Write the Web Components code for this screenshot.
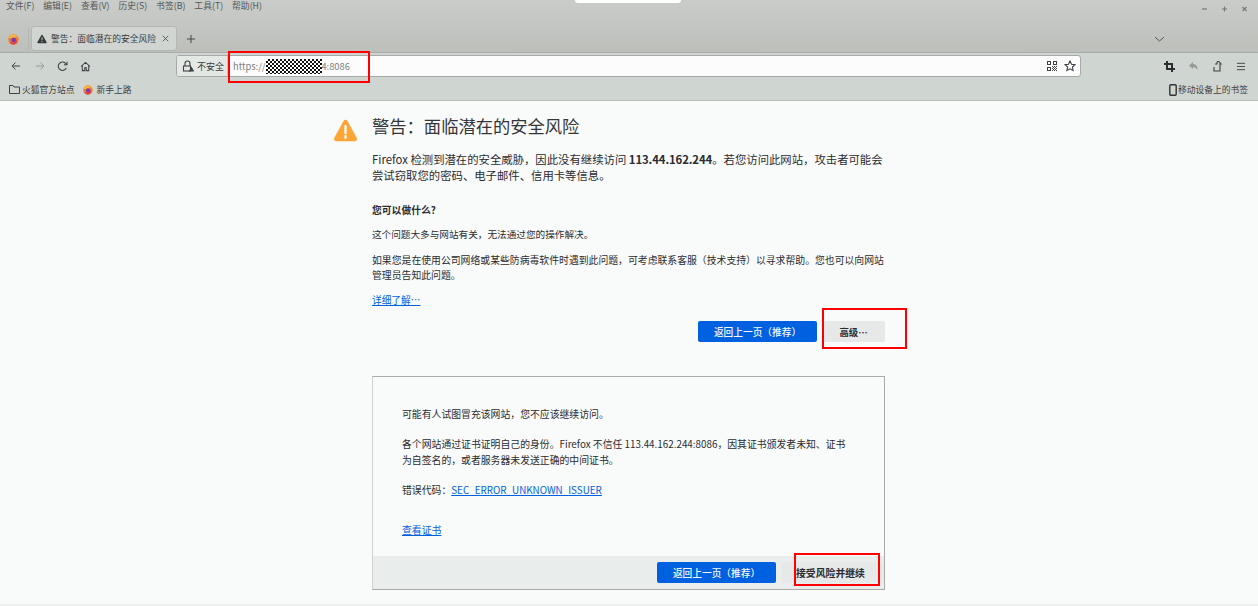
<!DOCTYPE html>
<html lang="zh">
<head>
<meta charset="utf-8">
<title>警告：面临潜在的安全风险</title>
<style>
  html, body { margin: 0; height: 100%; overflow: hidden; background: #f9fbfa; }
  body { font-family: "Noto Sans CJK SC", "Noto Sans", sans-serif; color: #2b2b30; }
</style>
</head>
<body>
<ff-app></ff-app>

<script>
const FOX = `<svg width="12" height="12" viewBox="0 0 12 12"><circle cx="6" cy="6" r="5.6" fill="#f0792b"/><path d="M1 4.5Q2 1 6 .6Q10 1 11.3 5Q10 2.6 7.6 2.8Q9 4 8.4 5.4Q7 3.6 4.6 4.4Q3 5 1 4.5Z" fill="#f6b73c"/><circle cx="6.2" cy="6.6" r="2.7" fill="#7b3bb0"/><path d="M1.2 7.5Q3 10 6 9.4Q9 9 9.6 6.4Q10.6 9.6 7 11.2Q3 12 1.2 7.5Z" fill="#e3344a"/></svg>`;

class FfMenubar extends HTMLElement {
  constructor() {
    super();
    this.attachShadow({ mode: 'open' });
    const items = ['文件(F)', '编辑(E)', '查看(V)', '历史(S)', '书签(B)', '工具(T)', '帮助(H)'];
    this.shadowRoot.innerHTML = `
      <style>
        :host { display: flex; align-items: center; height: 10px; padding: 0 6px; font-size: 8.800px; color: #55585a; position: relative; }
        span { margin-right: 8.900px; white-space: nowrap; }
        #win { margin-left: auto; display: flex; gap: 9px; padding-right: 2px; margin-top: 8px; }
        #win svg { display: block; }
        #notch { position: absolute; left: 575px; top: 0; width: 106px; height: 3px; background: #fff; border-radius: 0 0 4px 4px; }
      </style>
      ${items.map(t => `<span>${t}</span>`).join('')}
      <div id="notch"></div>
      <div id="win">
        <svg width="11" height="10" viewBox="0 0 11 10" stroke="#77797a" stroke-width="1.2"><path d="M3 5h5"/></svg>
        <svg width="11" height="10" viewBox="0 0 11 10" stroke="#77797a" stroke-width="1.2"><path d="M3 5h5M5.500 2.500v5"/></svg>
        <svg width="11" height="10" viewBox="0 0 11 10" stroke="#77797a" stroke-width="1.2"><path d="M3.500 3l4 4M7.500 3l-4 4"/></svg>
      </div>`;
  }
}
customElements.define('ff-menubar', FfMenubar);

class FfTabstrip extends HTMLElement {
  constructor() {
    super();
    this.attachShadow({ mode: 'open' });
    this.shadowRoot.innerHTML = `
      <style>
        :host { display: flex; align-items: center; height: 26px; margin-top: 16px; padding-left: 8px; }
        #logo { width: 11px; display: flex; padding-right: 9px; border-right: 1px solid #b3b6b1; height: 24px; align-items: center; margin-right: 2px; }
        #logo svg { width: 11px; height: 11px; }
        #tab { width: 146px; height: 25px; align-self: flex-start; box-sizing: border-box; border: 1px solid #b4b7b2; border-radius: 3px; background: #d0d5d1; display: flex; align-items: center; padding: 0 7px 0 5px; font-size: 8.750px; color: #3a3c3e; white-space: nowrap; }
        #tab svg.warn { margin-right: 4px; flex: none; }
        #close { margin-left: auto; display: flex; }
        #plus { margin-left: 9px; display: flex; }
        #chev { margin-left: auto; margin-right: 93px; display: flex; }
      </style>
      <div id="logo">${FOX}</div>
      <div id="tab">
        <svg class="warn" width="10" height="10" viewBox="0 0 12 11"><path d="M6 .5Q6.600 .5 7 1.200L11.600 9.300Q12 10.500 10.800 10.500H1.200Q0 10.500 .4 9.300L5 1.200Q5.400 .5 6 .5Z" fill="#37393b"/><path d="M6 3.500v3.500M6 8v1.300" stroke="#d0d5d1" stroke-width="1.100"/></svg>
        警告：面临潜在的安全风险
        <span id="close"><svg width="7" height="7" viewBox="0 0 9 9" stroke="#4a4c4e" stroke-width="1.100"><path d="M1 1l7 7M8 1l-7 7"/></svg></span>
      </div>
      <span id="plus"><svg width="10" height="10" viewBox="0 0 11 11" stroke="#3c3e40" stroke-width="1"><path d="M5.500 1v9M1 5.500h9"/></svg></span>
      <span id="chev"><svg width="11" height="7" viewBox="0 0 11 7" fill="none" stroke="#55585a" stroke-width="1"><path d="M1 1l4.500 4 4.500-4"/></svg></span>`;
  }
}
customElements.define('ff-tabstrip', FfTabstrip);

class FfNavbar extends HTMLElement {
  constructor() {
    super();
    this.attachShadow({ mode: 'open' });
    this.shadowRoot.innerHTML = `
      <style>
        :host { display: flex; align-items: center; height: 27px; padding-left: 11px; background: #cfd5d1; border-top: 1px solid #a9ada8; box-sizing: border-box; }
        svg { display: block; flex: none; fill: none; stroke: #3f4143; stroke-width: 1.100; }
        #back { margin-right: 14px; }
        #fwd { margin-right: 12px; stroke: #96999a; }
        #reload { margin-right: 12px; }
        #home { margin-right: 85px; }
        #url { width: 905px; height: 22px; box-sizing: border-box; border: 1px solid #a6a9a7; border-radius: 3px; background: #fbfcfb; display: flex; align-items: center; font-size: 9.300px; overflow: hidden; }
        #lockbox { display: flex; align-items: center; height: 100%; width: 51px; box-sizing: border-box; background: #e4e8e5; border-right: 1px solid #c0c3c1; padding: 0 0 0 5px; color: #37393b; white-space: nowrap; gap: 2px; margin-right: 5px; font-size: 9px; }
        #addr { color: #7d7f80; display: flex; align-items: center; white-space: nowrap; }
        #mask { width: 56px; height: 15px; margin: 0 -1px 0 1px;
          background: repeating-conic-gradient(#111 0 25%, #fff 0 50%) 0 0 / 4px 4px; }
        #right { margin-left: auto; display: flex; gap: 7px; padding-right: 4px; align-items: center; }
        #tools { display: flex; align-items: center; gap: 13px; margin-left: 83px; }
      </style>
      <svg id="back" width="10" height="10" viewBox="0 0 11 11"><path d="M10 5.500H1.200M5 1.700L1.200 5.500 5 9.300"/></svg>
      <svg id="fwd" width="10" height="10" viewBox="0 0 11 11"><path d="M1 5.500h8.800M6 1.700l3.800 3.800L6 9.300"/></svg>
      <svg id="reload" width="11" height="11" viewBox="0 0 11 11"><path d="M9.300 7A4.200 4.200 0 1 1 8.500 2.300L9.800 3.500"/><path d="M10 .8v3H7" /></svg>
      <svg id="home" width="11" height="11" viewBox="0 0 12 12"><path d="M1 6L6 1.500 11 6M2.500 5v5.500h2.700V7.500h1.600v3h2.700V5"/></svg>
      <div id="url">
        <div id="lockbox">
          <svg width="13" height="12" viewBox="0 0 13 12"><path d="M3 6V3.500a2.500 2.500 0 0 1 5 0V6"/><rect x="1.500" y="6" width="7" height="5"/><path d="M9.500 6.500l2.800 5h-5.600z" fill="#3f4143" stroke="none"/></svg>
          不安全
        </div>
        <div id="addr">https://<span id="mask"></span>4:8086</div>
        <div id="right">
          <svg width="10" height="10" viewBox="0 0 10 10" style="stroke:none;fill:#3f4143"><path d="M0 0h4v4H0zM1 1v2h2V1zM6 0h4v4H6zM7 1v2h2V1zM0 6h4v4H0zM1 7v2h2V7zM5 5h1v1H5zM7 5h1v1H7zM9 5h1v1H9zM6 6h1v1H6zM8 6h1v1H8zM5 7h1v1H5zM7 7h1v1H7zM9 7h1v1H9zM6 8h1v1H6zM8 8h1v1H8zM5 9h1v1H5zM7 9h1v1H7zM9 9h1v1H9z"/></svg>
          <svg width="12" height="12" viewBox="0 0 12 12"><path d="M6 1l1.500 3.200 3.500.4-2.600 2.400.7 3.500L6 8.800 2.900 10.500l.7-3.500L1 4.600l3.500-.4z"/></svg>
        </div>
      </div>
      <div id="tools">
        <svg width="11" height="11" viewBox="0 0 11 11" style="stroke-width:2;stroke:#2b2d2f"><path d="M3 0v8h8M0 3h8v8"/></svg>
        <svg width="11" height="11" viewBox="0 0 11 11" style="stroke:none;fill:#96999a"><path d="M5 1L1 4.500 5 8V6q3-.2 4.500 3 .3-5.500-4.500-6z"/></svg>
        <svg width="11" height="12" viewBox="0 0 11 12"><path d="M3 4h2V2.500a1.300 1.300 0 0 1 2.200-.6L9 4H8v7H2V7"/></svg>
        <svg width="10" height="9" viewBox="0 0 11 9" style="stroke:#4a4c4e"><path d="M1 1h9M1 4.500h9M1 8h9"/></svg>
      </div>`;
  }
}
customElements.define('ff-navbar', FfNavbar);

class FfBookmarks extends HTMLElement {
  constructor() {
    super();
    this.attachShadow({ mode: 'open' });
    this.shadowRoot.innerHTML = `
      <style>
        :host { display: flex; align-items: center; height: 22px; padding: 0 10px 0 9px; background: #cfd5d1; border-bottom: 1px solid #b9bdb9; box-sizing: border-box; font-size: 8.750px; color: #3f4143; white-space: nowrap; }
        svg { display: block; flex: none; }
        .item { display: flex; align-items: center; gap: 2px; margin-right: 8px; }
        .end { margin: 0 0 0 auto; gap: 1px; }
      </style>
      <div class="item"><svg width="11" height="9" viewBox="0 0 11 9" fill="none" stroke="#3f4143"><path d="M.5 8.500V.5h3.500l1 1.500h5.500v6.500z"/></svg>火狐官方站点</div>
      <div class="item">${FOX.replace('width="12" height="12"', 'width="10" height="10"')}<span style="margin-left:2px">新手上路</span></div>
      <div class="item end"><svg width="8" height="12" viewBox="0 0 8 12" fill="none" stroke="#2f3133" stroke-width="1.400"><rect x=".8" y=".8" width="6.400" height="10.400" rx="1"/></svg>移动设备上的书签</div>`;
  }
}
customElements.define('ff-bookmarks', FfBookmarks);

class FfButton extends HTMLElement {
  constructor() {
    super();
    this.attachShadow({ mode: 'open' });
    this.shadowRoot.innerHTML = `
      <style>
        :host { display: flex; align-items: center; justify-content: center; height: 21px; border-radius: 2px; font-size: 9.400px; font-weight: 700; background: #e6e9e8; color: #2b2b30; white-space: nowrap; }
        :host([primary]) { background: #0061e0; color: #f6f9fd; font-weight: 500; font-size: 9.700px; }
      </style>
      <slot></slot>`;
  }
}
customElements.define('ff-button', FfButton);

class FfWarning extends HTMLElement {
  constructor() {
    super();
    this.attachShadow({ mode: 'open' });
    this.shadowRoot.innerHTML = `
      <style>
        :host { display: block; flex: 1; position: relative; background: #f9fbfa; font-size: 9.650px; color: #2b2b30; border-bottom: 2px solid #eef1f0; }
        #col { width: 513px; margin-left: 372px; padding-top: 13px; position: relative; }
        #icon { position: absolute; left: -39px; top: 17px; }
        h1 { margin: 0; font-size: 17.300px; font-weight: 400; line-height: 24px; color: #35363a; }
        .lead { margin: 14px 0 0; font-size: 11.360px; line-height: 15.500px; color: #2b2b30; }
        .lead b { font-weight: 700; letter-spacing: -.1px; }
        h2 { margin: 20px 0 0; font-size: 9.800px; line-height: 14px; font-weight: 700; }
        p { margin: 0; line-height: 14px; }
        .p1 { margin-top: 10px; }
        .p2 { margin-top: 12px; font-size: 9.850px; line-height: 15px; }
        a { color: #0061e0; text-decoration: underline; }
        .more { margin-top: 10px; display: block; font-size: 9.700px; line-height: 14px; }
        #btns { display: grid; grid-template-columns: 119px 63px; gap: 5px; justify-content: end; margin-top: 14px; }
        #adv { margin-top: 34px; height: 214px; box-sizing: border-box; border: 1px solid #a8aba9; border-left-color: #cfd2d0; display: flex; flex-direction: column; }
        #adv-body { flex: 1; padding: 30px 30px 0 29px; font-size: 9.850px; }
        #adv-body p { line-height: 15px; }
        #adv-body p.s1 { margin-top: 15px; line-height: 15.500px; }
        #adv-body p.s2 { margin-top: 15px; }
        #adv-body p.s3 { margin-top: 25px; }
        #adv-foot { height: 33px; background: #e9eeec; display: flex; align-items: center; justify-content: flex-end; gap: 6px; }
        #adv-foot ff-button:first-child { width: 119px; }
        #adv-foot ff-button:last-child { width: 102px; justify-content: flex-start; padding-left: 14px; box-sizing: border-box; font-size: 9.850px; }
      </style>
      <div id="col">
        <svg id="icon" width="25" height="25" viewBox="0 0 27 26"><path d="M13.500 1.500q1.500 0 2.300 1.400l9.800 18q1.200 3-2 3.600H3.400q-3.200-.6-2-3.600l9.800-18q.8-1.400 2.300-1.400z" fill="#ffa436"/><path d="M13.500 8v8M13.500 19v2" stroke="#fff" stroke-width="2.400" stroke-linecap="round"/></svg>
        <h1>警告：面临潜在的安全风险</h1>
        <p class="lead">Firefox 检测到潜在的安全威胁，因此没有继续访问 <b>113.44.162.244</b>。若您访问此网站，攻击者可能会尝试窃取您的密码、电子邮件、信用卡等信息。</p>
        <h2>您可以做什么?</h2>
        <p class="p1">这个问题大多与网站有关，无法通过您的操作解决。</p>
        <p class="p2">如果您是在使用公司网络或某些防病毒软件时遇到此问题，可考虑联系客服（技术支持）以寻求帮助。您也可以向网站管理员告知此问题。</p>
        <a class="more">详细了解…</a>
        <div id="btns">
          <ff-button primary>返回上一页（推荐）</ff-button>
          <ff-button>高级…</ff-button>
        </div>
        <div id="adv">
          <div id="adv-body">
            <p>可能有人试图冒充该网站，您不应该继续访问。</p>
            <p class="s1">各个网站通过证书证明自己的身份。Firefox 不信任 113.44.162.244:8086，因其证书颁发者未知、证书<br>为自签名的，或者服务器未发送正确的中间证书。</p>
            <p class="s2">错误代码：<a>SEC_ERROR_UNKNOWN_ISSUER</a></p>
            <p class="s3"><a>查看证书</a></p>
          </div>
          <div id="adv-foot">
            <ff-button primary>返回上一页（推荐）</ff-button>
            <ff-button>接受风险并继续</ff-button>
          </div>
        </div>
      </div>`;
  }
}
customElements.define('ff-warning', FfWarning);

class FfApp extends HTMLElement {
  constructor() {
    super();
    this.attachShadow({ mode: 'open' });
    this.shadowRoot.innerHTML = `
      <style>
        :host { display: flex; flex-direction: column; width: 1258px; height: 606px; position: relative; overflow: hidden; }
        #top { background: linear-gradient(#c9ccc8, #bcbfba); height: 52px; }
        .mark { position: absolute; border: 2px solid #ff0000; box-sizing: border-box; pointer-events: none; }
      </style>
      <div id="top">
        <ff-menubar></ff-menubar>
        <ff-tabstrip></ff-tabstrip>
      </div>
      <ff-navbar></ff-navbar>
      <ff-bookmarks></ff-bookmarks>
      <ff-warning></ff-warning>
      <div class="mark" style="left:228px;top:51px;width:142px;height:32px"></div>
      <div class="mark" style="left:822px;top:308px;width:85px;height:41px"></div>
      <div class="mark" style="left:794px;top:553px;width:86px;height:33px"></div>`;
  }
}
customElements.define('ff-app', FfApp);
</script>
</body>
</html>
